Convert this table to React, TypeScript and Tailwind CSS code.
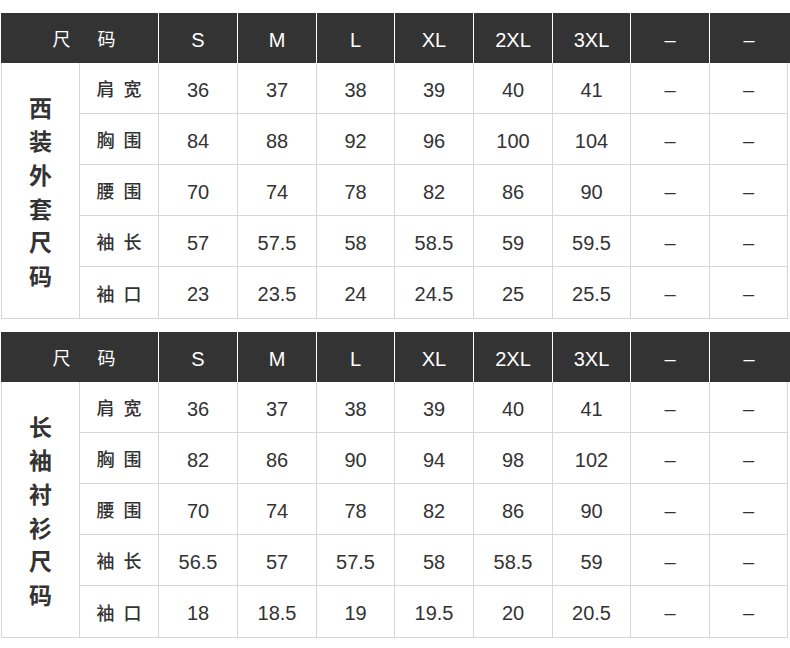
import React from "react";

const COLS = "grid grid-cols-[78px_79px_79px_79px_78px_79px_79px_78px_79px_78px]";

type Table = {
  title: string[];
  rows: { label: [string, string]; values: string[] }[];
};

const tables: Table[] = [
  {
    title: ["西", "装", "外", "套", "尺", "码"],
    rows: [
      { label: ["肩", "宽"], values: ["36", "37", "38", "39", "40", "41", "–", "–"] },
      { label: ["胸", "围"], values: ["84", "88", "92", "96", "100", "104", "–", "–"] },
      { label: ["腰", "围"], values: ["70", "74", "78", "82", "86", "90", "–", "–"] },
      { label: ["袖", "长"], values: ["57", "57.5", "58", "58.5", "59", "59.5", "–", "–"] },
      { label: ["袖", "口"], values: ["23", "23.5", "24", "24.5", "25", "25.5", "–", "–"] },
    ],
  },
  {
    title: ["长", "袖", "衬", "衫", "尺", "码"],
    rows: [
      { label: ["肩", "宽"], values: ["36", "37", "38", "39", "40", "41", "–", "–"] },
      { label: ["胸", "围"], values: ["82", "86", "90", "94", "98", "102", "–", "–"] },
      { label: ["腰", "围"], values: ["70", "74", "78", "82", "86", "90", "–", "–"] },
      { label: ["袖", "长"], values: ["56.5", "57", "57.5", "58", "58.5", "59", "–", "–"] },
      { label: ["袖", "口"], values: ["18", "18.5", "19", "19.5", "20", "20.5", "–", "–"] },
    ],
  },
];

const sizes = ["S", "M", "L", "XL", "2XL", "3XL", "–", "–"];

function SizeTable({ t }: { t: Table }) {
  return (
    <div className="flex flex-col">
      <div className={`${COLS} h-[50px] bg-[#333333] border-l border-[#333333] text-white`}>
        <div className="col-span-2 flex items-center justify-center gap-[27px] pl-2 pt-[4px] text-[18px] border-r border-white">
          <span>尺</span>
          <span>码</span>
        </div>
        {sizes.map((s, i) => (
          <div
            key={i}
            className={`flex items-center justify-center pt-[3px] text-[20px] ${i < sizes.length - 1 ? "border-r border-white" : ""}`}
          >
            {s}
          </div>
        ))}
      </div>
      <div className={`${COLS} grid-rows-[51px_51px_51px_51px_52px] border-l border-[#d6d6d6] text-[#333333]`}>
        <div className="row-span-5 flex flex-col items-center justify-center border-r border-b border-[#d6d6d6] text-[23px] font-bold leading-[33.6px] pt-[6px]">
          {t.title.map((c, i) => (
            <span key={i}>{c}</span>
          ))}
        </div>
        {t.rows.map((r, ri) => (
          <React.Fragment key={ri}>
            <div className="flex items-center justify-center gap-[9px] pt-[5px] border-r border-b border-[#d6d6d6] text-[18px] font-medium">
              <span>{r.label[0]}</span>
              <span>{r.label[1]}</span>
            </div>
            {r.values.map((v, vi) => (
              <div
                key={vi}
                className="flex items-center justify-center pt-[3px] border-r border-b border-[#d6d6d6] text-[20px]"
              >
                {v}
              </div>
            ))}
          </React.Fragment>
        ))}
      </div>
    </div>
  );
}

export default function App() {
  return (
    <div
      className="w-[790px] h-[648px] bg-white pt-[13px] pl-[1px] flex flex-col gap-[13px]"
      style={{ fontFamily: '"Liberation Sans", "Noto Sans CJK SC", sans-serif' }}
    >
      {tables.map((t, i) => (
        <SizeTable key={i} t={t} />
      ))}
    </div>
  );
}
